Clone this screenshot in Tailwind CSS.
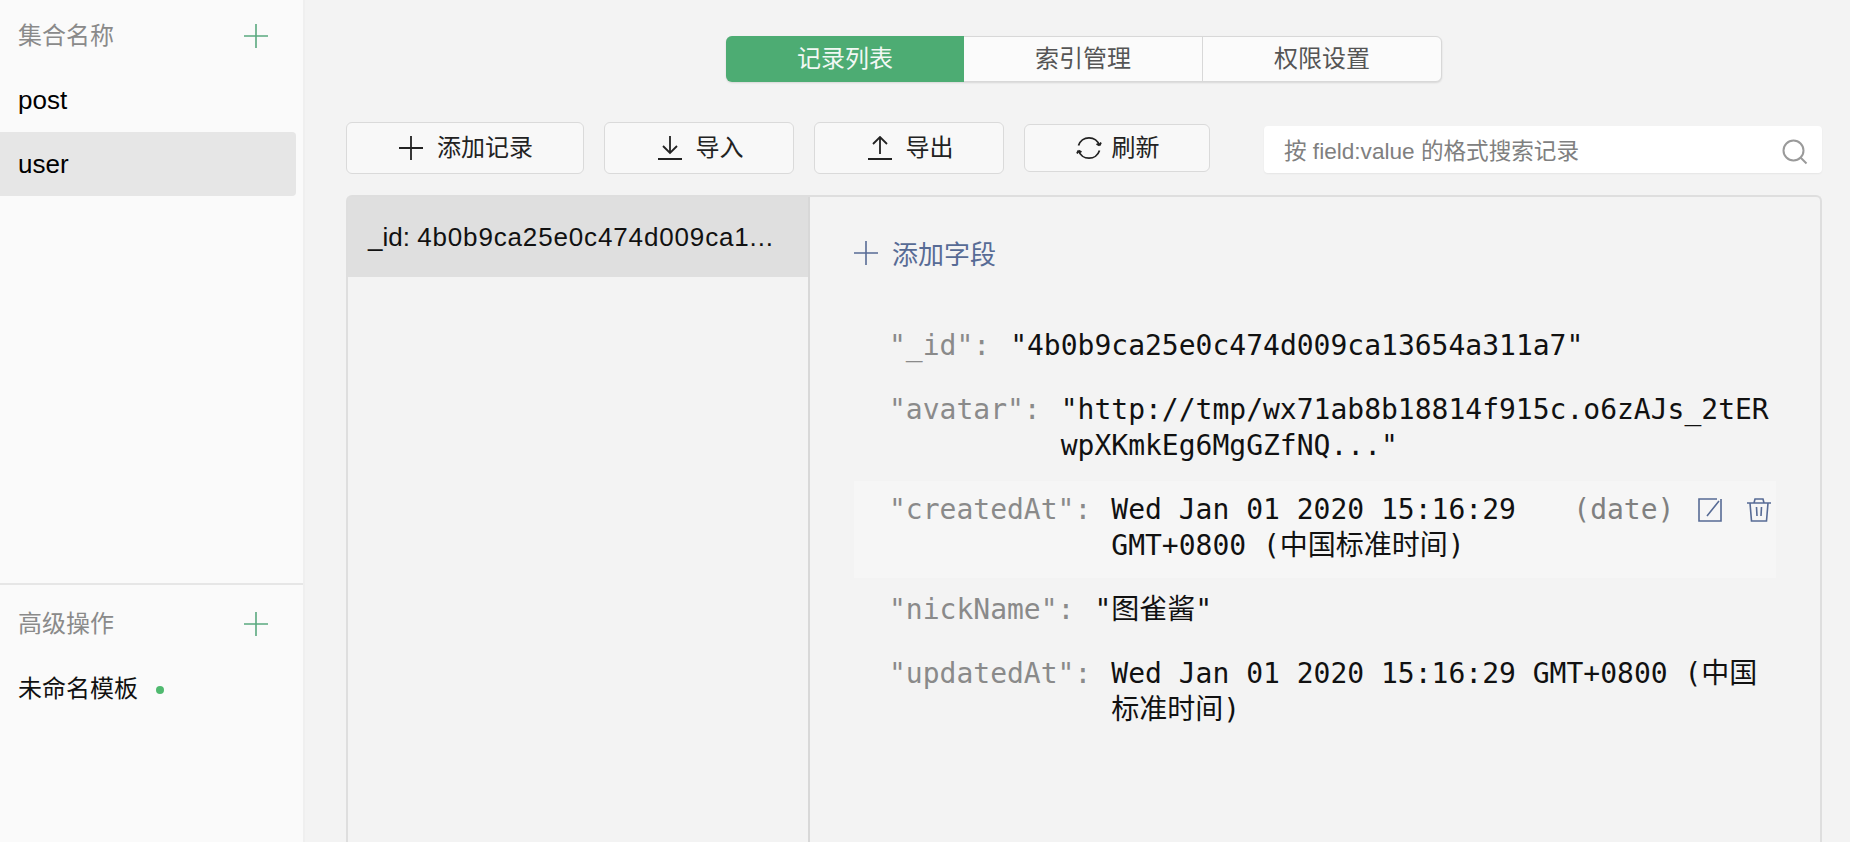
<!DOCTYPE html>
<html lang="zh-CN">
<head>
    <meta charset="UTF-8">
    <title>云开发数据库</title>
    <script src="https://cdn.jsdelivr.net/npm/@tailwindcss/browser@4"></script>
</head>
<body class="bg-[#f3f3f3] overflow-hidden font-['Liberation_Sans','Noto_Sans_CJK_SC',sans-serif]">
<div class="flex h-[842px] w-[1850px] overflow-hidden">

    <!-- Sidebar -->
    <aside class="w-[305px] shrink-0 flex flex-col bg-[#fafafa] border-r-2 border-[#efefef]">
        <div class="h-[585px] border-b-2 border-[#e6e6e6]">
            <div class="h-[72px] pl-[18px] pr-[35px] flex items-center justify-between text-[24px] text-[#8a8a8a]">
                <span>集合名称</span>
                <svg class="w-[24px] h-[24px] text-[#5aa97f]" viewBox="0 0 24 24" fill="none" stroke="currentColor" stroke-width="1.6"><path d="M12 0v24M0 12h24"/></svg>
            </div>
            <div class="h-[56px] pl-[18px] flex items-center text-[26px] text-black">post</div>
            <div class="mt-[4px] mr-[7px] h-[64px] pl-[18px] flex items-center text-[26px] text-black bg-[#e6e6e6] rounded-r-[4px]">user</div>
        </div>
        <div class="h-[72px] mt-[3px] pl-[18px] pr-[35px] flex items-center justify-between text-[24px] text-[#8a8a8a]">
            <span>高级操作</span>
            <svg class="w-[24px] h-[24px] text-[#5aa97f]" viewBox="0 0 24 24" fill="none" stroke="currentColor" stroke-width="1.6"><path d="M12 0v24M0 12h24"/></svg>
        </div>
        <div class="h-[56px] mt-px pl-[18px] flex items-center text-[24px] text-[#111]">
            <span>未命名模板</span>
            <span class="ml-[18px] mt-[2px] w-[8px] h-[8px] rounded-full bg-[#4fb96f]"></span>
        </div>
    </aside>

    <!-- Main -->
    <main class="w-[1545px] pl-[41px] pr-[28px] flex flex-col">
        <div class="pt-[36px] flex justify-center">
            <div class="flex h-[46px] w-[716px] text-[24px] rounded-[6px] border border-[#d8d8d8] shadow-[0_1px_2px_rgba(0,0,0,0.12)] bg-[#fbfbfb] text-[#555]">
                <div class="flex-1 -my-px -ml-px flex items-center justify-center bg-[#4dac73] text-[#f2f8f4] rounded-l-[6px]">记录列表</div>
                <div class="flex-1 flex items-center justify-center border-r border-[#d8d8d8]">索引管理</div>
                <div class="flex-1 flex items-center justify-center">权限设置</div>
            </div>
        </div>

        <!-- Toolbar -->
        <div class="mt-[40px] flex items-center text-[24px] text-[#222]">
            <button class="w-[238px] h-[52px] pl-[2px] flex items-center justify-center gap-[14px] bg-[#f8f8f8] border border-[#dadada] rounded-[6px]">
                <svg class="w-[24px] h-[24px]" viewBox="0 0 24 24" fill="none" stroke="#222" stroke-width="1.8"><path d="M12 0v24M0 12h24"/></svg>
                <span>添加记录</span>
            </button>
            <button class="ml-[20px] w-[190px] h-[52px] pl-[3px] flex items-center justify-center gap-[14px] bg-[#f8f8f8] border border-[#dadada] rounded-[6px]">
                <svg class="w-[24px] h-[24px]" viewBox="0 0 24 24" fill="none" stroke="#222" stroke-width="1.8"><path d="M12 0v16M5 10l7 7 7-7M0 23h24"/></svg>
                <span>导入</span>
            </button>
            <button class="ml-[20px] w-[190px] h-[52px] pl-[3px] flex items-center justify-center gap-[14px] bg-[#f8f8f8] border border-[#dadada] rounded-[6px]">
                <svg class="w-[24px] h-[24px]" viewBox="0 0 24 24" fill="none" stroke="#222" stroke-width="1.8"><path d="M12 18V2M5 8l7-7 7 7M0 23h24"/></svg>
                <span>导出</span>
            </button>
            <button class="ml-[20px] w-[186px] h-[48px] flex items-center justify-center gap-[10px] pl-px bg-[#f8f8f8] border border-[#dadada] rounded-[6px]">
                <svg class="w-[26px] h-[26px]" viewBox="0 0 26 26" fill="none" stroke="#222" stroke-width="1.8"><path d="M2.500 10.500A11 11 0 0 1 23.500 10.500M23.500 15.500A11 11 0 0 1 2.500 15.500M23.500 10.500l1.500-3M23.500 10.500l-3-1.500M2.500 15.500l-1.500 3M2.500 15.500l3 1.500"/></svg>
                <span>刷新</span>
            </button>
            <div class="ml-[54px] mt-[2px] w-[558px] h-[47px] pt-[5px] pl-[20px] pr-[14px] flex items-center justify-between bg-white rounded-[4px] text-[22.600px] text-[#808080] shadow-[0_1px_2px_rgba(0,0,0,0.06)]">
                <span>按 field:value 的格式搜索记录</span>
                <svg class="w-[26px] h-[26px]" viewBox="0 0 26 26" fill="none" stroke="#9a9a9a" stroke-width="2"><circle cx="11.500" cy="11.500" r="10"/><path d="M18.500 18.500l6 6"/></svg>
            </div>
        </div>

        <!-- Records panel -->
        <div class="mt-[21px] flex-1 flex border-2 border-b-0 border-[#dedede] rounded-t-[6px]">
            <div class="w-[462px] shrink-0 border-r-2 border-[#d8d8d8]">
                <div class="h-[80px] pl-[20px] flex items-center text-[26px] text-[#111] bg-[#dfdfdf] whitespace-pre"><span>_id: </span><span class="tracking-[0.85px]">4b0b9ca25e0c474d009ca1...</span></div>
            </div>
            <div class="flex-1 pl-[44px] pr-[44px]">
                <div class="mt-[40px] flex items-center gap-[14px] text-[26px] leading-[36px] text-[#576b95]">
                    <svg class="mb-[4px] w-[24px] h-[24px]" viewBox="0 0 24 24" fill="none" stroke="currentColor" stroke-width="1.6"><path d="M12 0v24M0 12h24"/></svg>
                    <span>添加字段</span>
                </div>
                <div class="mt-[41px] text-[28px] leading-[36px] text-[#111] font-['DejaVu_Sans_Mono','Noto_Sans_CJK_SC',monospace]">
                    <div class="flex pl-[35px] py-[14px]">
                        <span class="text-[#8a8a8a] mr-[20px]">"_id":</span>
                        <span>"4b0b9ca25e0c474d009ca13654a311a7"</span>
                    </div>
                    <div class="flex pl-[35px] py-[14px]">
                        <span class="text-[#8a8a8a] mr-[20px] shrink-0">"avatar":</span>
                        <span class="w-[712px] break-all">"http://tmp/wx71ab8b18814f915c.o6zAJs_2tERwpXKmkEg6MgGZfNQ..."</span>
                    </div>
                    <div class="flex mt-[3px] pl-[35px] pt-[11px] pb-[14px] bg-[#f6f6f6]">
                        <span class="text-[#8a8a8a] mr-[20px] shrink-0">"createdAt":</span>
                        <span class="w-[440px] shrink-0">Wed Jan 01 2020 15:16:29 GMT+0800 (中国标准时间)</span>
                        <span class="ml-[22px] text-[#808080]">(date)</span>
                        <svg class="ml-[24px] mt-[6px] w-[24px] h-[24px] shrink-0" viewBox="0 0 24 24" fill="none" stroke="#576b95" stroke-width="1.6"><path d="M23 1v22H1V1h18M21 3L9 18"/></svg>
                        <svg class="ml-[25px] mt-[6px] w-[24px] h-[24px] shrink-0" viewBox="0 0 24 24" fill="none" stroke="#576b95" stroke-width="1.6"><path d="M0 5h24M7 5l1-4h8l1 4M3 5l1.500 18h15L21 5M9.500 9l.5 9M14.500 9l-.5 9"/></svg>
                    </div>
                    <div class="flex pl-[35px] py-[14px]">
                        <span class="text-[#8a8a8a] mr-[20px]">"nickName":</span>
                        <span>"图雀酱"</span>
                    </div>
                    <div class="flex pl-[35px] py-[14px]">
                        <span class="text-[#8a8a8a] mr-[20px] shrink-0">"updatedAt":</span>
                        <span class="w-[660px]">Wed Jan 01 2020 15:16:29 GMT+0800 (中国标准时间)</span>
                    </div>
                </div>
            </div>
        </div>
    </main>
</div>
</body>
</html>
